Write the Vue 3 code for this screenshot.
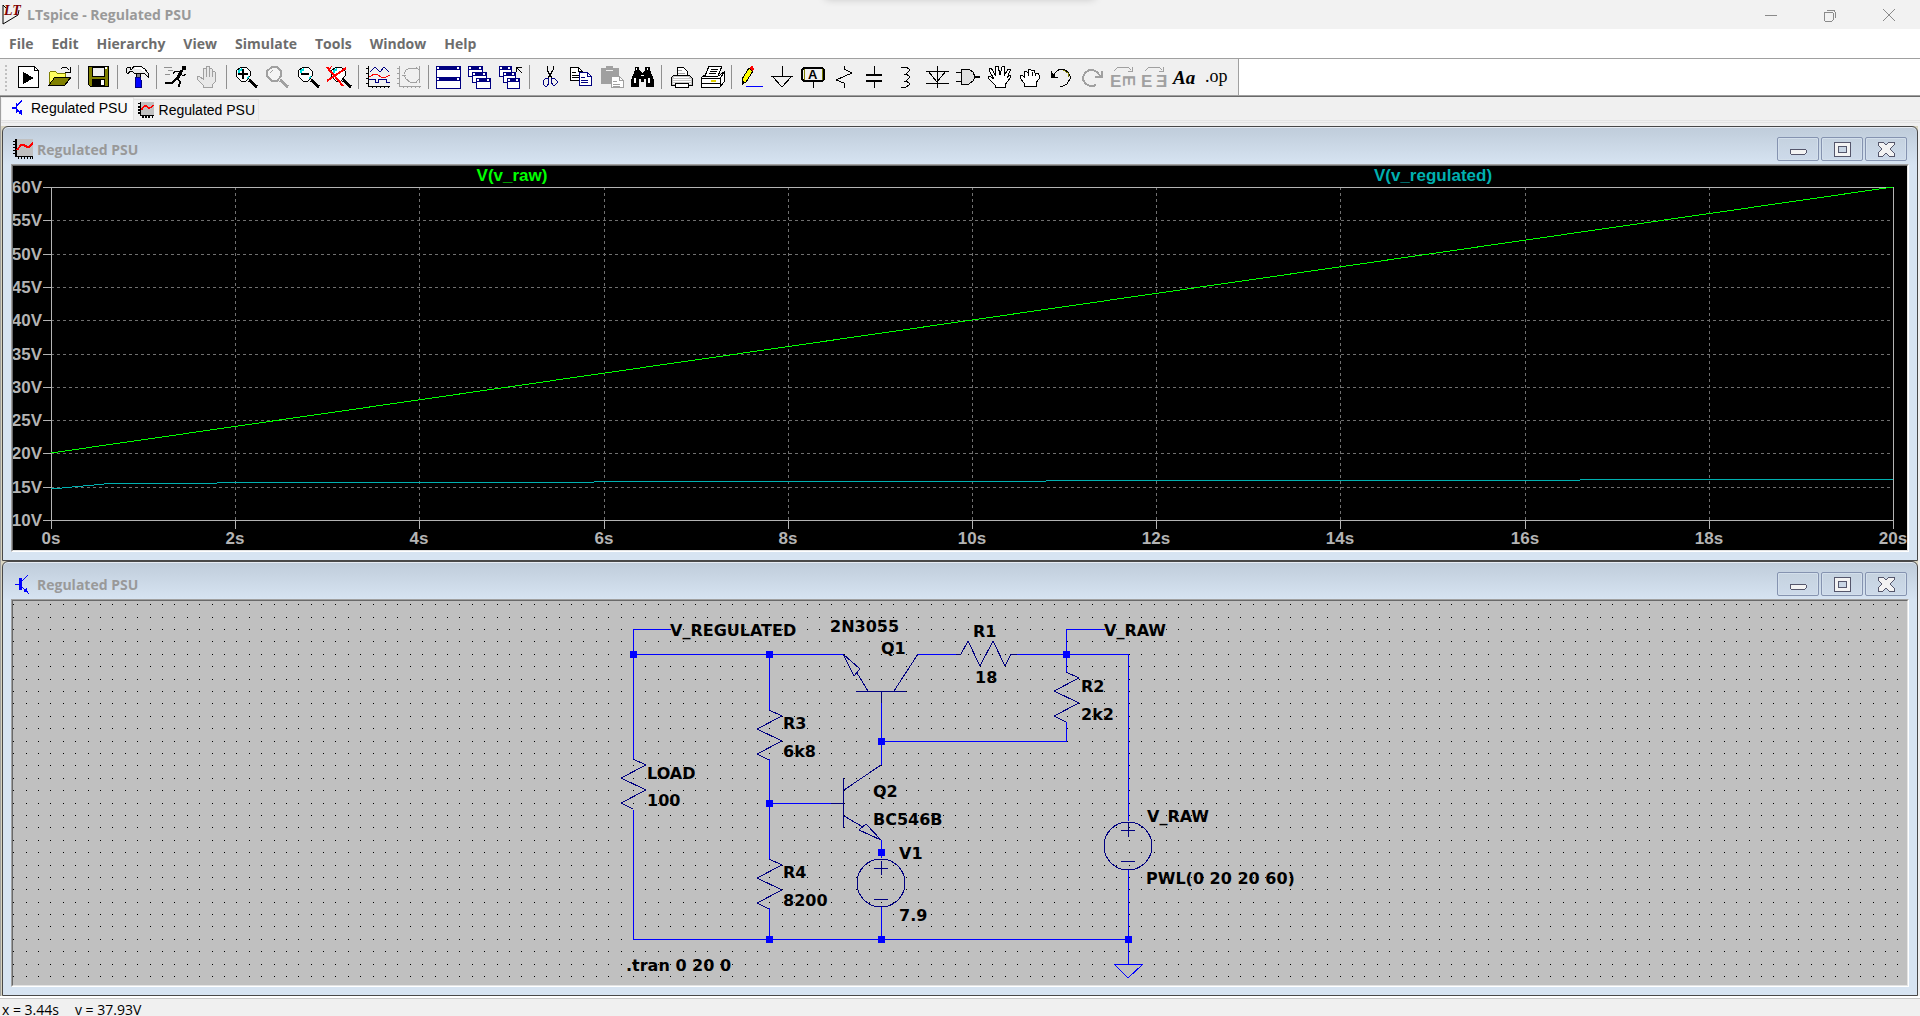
<script setup>
import { computed, onBeforeUnmount, onMounted, reactive, ref } from "vue";

const menus = ["File", "Edit", "Hierarchy", "View", "Simulate", "Tools", "Window", "Help"];

const GREY = "#a0a0a0";
const NAVY = "#000080";

// shape helpers for the 24x24 toolbar glyphs
const line = (d, stroke = "#000", width = 1) => ({ d, stroke, width, fill: "none" });
const area = (d, fill = "#000", stroke = "none", width = 1) => ({ d, fill, stroke, width });
const word = (text, x, y, size, style = {}) => ({ text, x, y, size, ...style });

const lens = "M7 2H12L16 6V11L12 16H7L2 11V6Z";
const lensGlints = [line("M5 8V6L8 4", "#00e0e0", 2), line("M13 14L15 11", "#00e0e0", 1)];
const axes = "M2 1V21H24M0 3H2M0 8H2M0 13H2M0 18H2M6 21V23M10 21V23M14 21V23M18 21V23M22 21V23";
const openHand =
    "M8 22V20L2 14V11H4L8 14V4L9 3H11V11V2L12 1H14V11V3H16L17 4V11V6H19L20 7V17L17 20V22Z";

function miniWindow(x, y, w, h) {
    return [
        area(`M${x} ${y}h${w}v${h}h${-w}Z`, "#fff", NAVY),
        area(`M${x} ${y}h${w}v4h${-w}Z`, NAVY),
        area(`M${x + 1} ${y + 1}h2v2h-2ZM${x + w - 3} ${y + 1}h2v2h-2Z`, "#fff"),
    ];
}

function sheet(x, y, color = "#000", w = 12, h = 13) {
    return [
        area(`M${x} ${y}h${w - 4}l4 4v${h - 4}h${-w}Z`, "#fff", color),
        line(`M${x + w - 4} ${y}v4h4M${x + 2} ${y + 5}h4M${x + 2} ${y + 8}h7M${x + 2} ${y + 10}h7`, color),
    ];
}

const toolGroups = [
    [
        {
            label: "New Schematic",
            shapes: [area("M2 1H18L22 5V22H2Z", "#fff", "#000", 1), line("M18 1V5H22"), area("M7 7L18 13L7 19Z")],
        },
        {
            label: "Open",
            shapes: [
                area("M2 20V8L4 6H8L10 8H18V12H9Z", "#ffff60", "#808000"),
                area("M8 12H24L18 20H2Z", "#808000", "#000"),
                line("M14 4L16 2H19L22 5M23 2V7H18", "#000"),
            ],
        },
    ],
    [
        {
            label: "Save",
            shapes: [
                area("M2 1H22V21H4L2 19Z", "#808000", "#000"),
                area("M6 2H18V11H6Z", "#efefef", "#000"),
                area("M6 14H19V21H6Z"),
                area("M15 15H18V20H15ZM19 2H21V4H19Z", "#fff"),
            ],
        },
    ],
    [
        {
            label: "Control Panel",
            shapes: [
                area("M1 4L3 2H5V4H7L9 1H15L20 4L23 8V12L20 9L17 8H9L7 6H5L3 9L1 7Z", "#e8e8e8", "#000"),
                line("M10 3H15L20 6", "#fff", 2),
                area("M11 8H15V12H11Z", "#808080", "#000"),
                area("M11 12H15L16 15V22H10V15Z", "#0000ff", NAVY),
            ],
        },
    ],
    [
        {
            label: "Run",
            shapes: [
                area("M18 1H22V5H18Z"),
                line("M18 5L13 14", "#000", 3),
                line("M17 6H11L9 9M17 9L19 11L22 9M12 13L16 16"),
                line("M16 16L15 22M12 14L8 18H1", "#000", 2),
                line("M0 2H8M4 5H9M1 9H6", "#909090", 1),
            ],
        },
        { label: "Halt", disabled: true, shapes: [area(openHand, "#e8e8e8", GREY, 1), line("M11 4V12M14 4V12M17 6V12", GREY)] },
    ],
    [
        {
            label: "Zoom In",
            shapes: [area(lens, "#fff", "#000"), ...lensGlints, line("M9 4V14M4 9H14", "#000", 2), line("M15 15L23 22", "#000", 3)],
        },
        {
            label: "Pan",
            disabled: true,
            shapes: [area(lens, "#f4f4f4", GREY, 2), line("M5 8L8 5", GREY), line("M15 15L23 22", GREY, 3)],
        },
        {
            label: "Zoom Out",
            shapes: [area(lens, "#fff", "#000"), ...lensGlints, line("M5 9H13", "#000", 2), line("M15 15L23 22", "#000", 3)],
        },
        {
            label: "Zoom Full Extents",
            shapes: [
                area("M9 2H14L18 6V11L14 16H9L4 11V6Z", "#fff", "#000"),
                line("M7 8V6L10 4", "#00e0e0", 2),
                line("M16 15L24 22", "#000", 3),
                line("M0 2L16 21M0 16L19 3", "#ff0000", 2),
                line("M1 6L5 1", "#ff0000", 1),
            ],
        },
    ],
    [
        {
            label: "Autorange",
            shapes: [
                line(axes),
                line("M4 7L9 2L14 7L18 2L23 7", NAVY),
                line("M3 11H5L8 9L12 10L15 12H20L24 10", "#ff0000"),
                line("M3 14H9V17H12V14H20V17H24", NAVY),
            ],
        },
        {
            label: "Pick Visible Traces",
            disabled: true,
            shapes: [line(axes, GREY), line("M7 9L9 5L13 3H20M7 10L9 14L13 17H20M19 2L22 5V14L19 17M22 1V18M5 10H9", GREY)],
        },
    ],
    [
        { label: "Tile Windows", shapes: [...miniWindow(0, 1, 24, 11), ...miniWindow(0, 12, 24, 11)] },
        {
            label: "Cascade Windows",
            shapes: [...miniWindow(1, 1, 14, 10), ...miniWindow(5, 7, 14, 10), ...miniWindow(9, 13, 14, 10)],
        },
        {
            label: "Close All Windows",
            shapes: [
                ...miniWindow(1, 1, 12, 10),
                ...miniWindow(5, 7, 12, 10),
                ...miniWindow(9, 13, 12, 10),
                line("M18 7V2H24M18 2L24 8", "#000"),
            ],
        },
    ],
    [
        {
            label: "Cut",
            shapes: [
                line("M10 1V5L15 13M16 1V5L11 13", "#000", 1),
                line("M12 8L14 12M14 8L12 12", "#000", 2),
                line("M11 13H9L6 16V19L8 21H10L12 18ZM15 13H17L20 16V18L18 20H16L14 17Z", NAVY, 1),
            ],
        },
        { label: "Copy", shapes: [...sheet(2, 2), ...sheet(11, 7, NAVY)] },
        {
            label: "Paste",
            disabled: true,
            shapes: [area("M2 3H7V1H14V3H20V19H2Z", GREY), line("M7 5H14", "#f0f0f0", 1), ...sheet(12, 11, GREY, 12, 11)],
        },
        {
            label: "Find",
            shapes: [
                area("M5 2H9V5L12 8L15 5V2H20V5L24 15V22H16V14H14V17H11V14H9V22H1V15L5 5Z"),
                area("M6 3H7V5H6ZM17 3H18V5H17ZM4 13H6V18H4ZM18 13H20V18H18ZM11 10H14V11H11Z", "#fff"),
            ],
        },
    ],
    [
        {
            label: "Print",
            shapes: [
                area("M8 10V2H14L18 6V10Z", "#fff", "#000"),
                area("M5 10H20L23 13V20H2V13Z", "#c8c8c8", "#000"),
                line("M5 12H20M4 14H22M4 16H22M4 18H22", "#fff"),
                area("M6 18H19V22H6Z", "#fff", "#000"),
                line("M9 5H13M9 8H16", GREY),
            ],
        },
        {
            label: "Print Setup",
            shapes: [
                area("M1 13L5 10H20L24 7V17L20 22H1Z", "#fff", "#000"),
                area("M5 11L9 1H22L18 11Z", "#fff", "#000"),
                line("M11 4H18M10 6H17M9 8H16M1 13H20V22M1 18H20M20 13L24 8"),
                line("M11 16H16", "#e0d000", 2),
            ],
        },
    ],
    [
        {
            label: "Draw Wire",
            shapes: [
                area("M10 3L14 6L7 17L3 19V14Z", "#ffff00", "#000"),
                area("M10 3L12 1H14L15 4L14 6Z", "#ff0000"),
                area("M3 15L6 18L3 20Z"),
                line("M7 21H24", "#0000ff"),
            ],
        },
        { label: "Place Ground", shapes: [line("M12 1V11M1 11H23M2 11L12 22L22 11", "#000")] },
        {
            label: "Label Net",
            shapes: [
                area("M3 3H21L23 5V14L21 16H3L1 14V5Z", "#f0f0f0", "#000", 2),
                line("M3 4V15M21 4V15", "#808000"),
                word("A", 7, 14, 13, { weight: 700, family: "sans" }),
                line("M12 17V23"),
            ],
        },
        { label: "Place Resistor", shapes: [line("M12 1V4L20 8L4 15L12 18V23", "#000")] },
        { label: "Place Capacitor", shapes: [line("M11 1V10M11 16V23"), line("M3 10H19M3 16H19", "#000", 2)] },
        {
            label: "Place Inductor",
            shapes: [line("M7 2H12L15 4V6L12 9H10M12 9L15 11V13L12 16H10M12 16L15 18V20L12 22H7", "#000")],
        },
        { label: "Place Diode", shapes: [line("M12 1V23M1 6H24M3 6L12 17L21 6M1 18H24", "#000")] },
        {
            label: "Place Component",
            shapes: [area("M5 4H13L17 7L19 12L17 16L13 19H5Z", "#e0e0e0", "#000"), line("M0 7H5M0 16H5"), line("M19 12H24", "#000", 2)],
        },
        {
            label: "Move",
            shapes: [
                area(
                    "M8 22V20L1 13V11H3L7 14L2 5V3H4L9 11L8 2L9 1H11L13 10L15 2L17 1L18 3L17 11L21 4H23V6L20 13L23 10L24 12L18 20V22Z",
                    "#fff",
                    "#000",
                ),
            ],
        },
        {
            label: "Drag",
            shapes: [
                area("M6 21V18L2 13V10H4L6 12V7L8 6L10 8V5L12 4L14 6L16 5L17 8L20 8L21 10V14L18 18V21Z", "#fff", "#000"),
                line("M10 8V11M14 7V11M17 8V11"),
            ],
        },
        {
            label: "Undo",
            shapes: [
                line("M2 6V12H9M3 12L7 7L11 4H15L19 7L21 11V14L18 19L14 21H11", "#000", 1),
                line("M3 8V11H6", "#000", 2),
                line("M14 5L19 8L20 12", "#808000", 1),
            ],
        },
        {
            label: "Redo",
            disabled: true,
            shapes: [line("M22 6V12H15M21 12L17 7L13 5H9L5 8L3 12V15L6 19L10 21H13L16 20", GREY, 2)],
        },
        {
            label: "Rotate",
            disabled: true,
            shapes: [
                line("M3 6L7 2H17L20 5M21 2V6H17", GREY),
                word("E", -1, 22, 17, { weight: 700, family: "sans", fill: GREY }),
                word("E", 0, 0, 17, { weight: 700, family: "sans", fill: GREY, transform: "translate(12 10) rotate(90)" }),
            ],
        },
        {
            label: "Mirror",
            disabled: true,
            shapes: [
                line("M3 6L7 2H17L20 5M21 2V6H17", GREY),
                word("E", -1, 22, 17, { weight: 700, family: "sans", fill: GREY }),
                word("Ǝ", 14, 22, 17, { weight: 700, family: "sans", fill: GREY }),
            ],
        },
        { label: "Text", shapes: [word("Aa", 0, 19, 19, { weight: 700, italic: true })] },
        { label: "SPICE Directive", shapes: [word(".op", 1, 17, 18)] },
    ],
];

function useSize(width, height) {
    const el = ref(null);
    const size = reactive({ width, height });
    let observer;
    onMounted(() => {
        observer = new ResizeObserver(([entry]) => {
            size.width = Math.round(entry.contentRect.width);
            size.height = Math.round(entry.contentRect.height);
        });
        observer.observe(el.value);
    });
    onBeforeUnmount(() => observer.disconnect());
    return { el, size };
}

// waveform viewer
const { el: plotEl, size: plotSize } = useSize(1894, 384);

const frame = computed(() => ({
    left: 38,
    top: 21,
    right: plotSize.width - 14,
    bottom: plotSize.height - 30,
}));
const timeX = (t) => Math.round(frame.value.left + ((frame.value.right - frame.value.left) * t) / 20);
const voltY = (v) => Math.round(frame.value.bottom - ((frame.value.bottom - frame.value.top) * (v - 10)) / 50);

const timeTicks = [0, 2, 4, 6, 8, 10, 12, 14, 16, 18, 20];
const voltTicks = [60, 55, 50, 45, 40, 35, 30, 25, 20, 15, 10];

const traces = [
    {
        name: "V(v_raw)",
        color: "#00ff00",
        labelAt: 5,
        data: [[0, 20], [20, 60]],
    },
    {
        name: "V(v_regulated)",
        color: "#00b0b0",
        labelAt: 15,
        data: [[0, 14.6], [0.7, 15.5], [1.8, 15.6], [5.9, 15.7], [10.8, 15.9], [16.6, 16], [20, 16.2]],
    },
];
const tracePoints = (trace) => trace.data.map(([t, v]) => `${timeX(t)},${voltY(v)}`).join(" ");

// schematic editor
const { el: sheetEl, size: sheetSize } = useSize(1894, 384);

const gridDots = computed(() => {
    const step = 12.396;
    let d = "";
    for (let y = 3.2; y < sheetSize.height; y += step) {
        for (let x = 0.2; x < sheetSize.width - 5; x += step) {
            d += `M${Math.round(x)} ${Math.round(y)}h1v1h-1z`;
        }
    }
    return d;
});

const wires = [
    "M658 28H620V53H830",
    "M620 53V158M620 209V338H1115",
    "M756 53V109M756 158V258M756 307V338",
    "M756 202H818",
    "M905 53H948M998 53H1115V220M1115 269V363",
    "M1092 28H1053V71M1053 121V140H868",
    "M868 102V164M868 239V257M868 306V338",
    "M1101 363H1130L1115 377Z",
];

const resistor = "l13 6l-25 13l25 12l-25 13l12 6";
const symbols = [
    `M620 158${resistor}`,
    `M756 109${resistor}`,
    `M756 258${resistor}`,
    `M1053 71${resistor}`,
    "M943 53H948L955 40L967 65L980 40L992 65L998 53H1004",
    // Q1
    "M843 90H893M868 90V102M855 90L844 72M830 53L841 75L847 68ZM881 90L905 53",
    // Q2
    "M830 177V227M818 202H830M831 189L868 164M831 215L850 226M868 239L846 229L853 223Z",
    // polarity marks
    "M861 267H875M868 260V274M861 298H875",
    "M1108 229H1122M1115 222V236M1108 260H1122",
];
const sources = [
    { x: 868, y: 282 },
    { x: 1115, y: 245 },
];
const junctions = [
    [620, 53], [756, 53], [1053, 53], [868, 140], [756, 202],
    [868, 251], [756, 338], [868, 338], [1115, 338],
];
const labels = [
    ["V_REGULATED", 657, 35],
    ["2N3055", 817, 31],
    ["Q1", 868, 53],
    ["R1", 960, 36],
    ["18", 962, 82],
    ["V_RAW", 1091, 35],
    ["R2", 1068, 91],
    ["2k2", 1068, 119],
    ["R3", 770, 128],
    ["6k8", 770, 156],
    ["LOAD", 634, 178],
    ["100", 634, 205],
    ["Q2", 860, 196],
    ["BC546B", 860, 224],
    ["V1", 886, 258],
    ["7.9", 886, 320],
    ["R4", 770, 277],
    ["8200", 770, 305],
    ["V_RAW", 1134, 221],
    ["PWL(0 20 20 60)", 1133, 283],
    [".tran 0 20 0", 613, 370],
];
</script>

<template>
    <div class="app">
        <header class="title-bar">
            <svg class="logo" viewBox="0 0 20 20" aria-hidden="true">
                <path d="M1 0V19L16 10L17 5" fill="none" stroke="#000" />
                <path d="M1 0L4 3" stroke="#000" />
                <text x="2" y="10" class="logo-text">LT</text>
            </svg>
            <h1>LTspice - Regulated PSU</h1>
            <div class="window-buttons">
                <button type="button" aria-label="Minimize">
                    <svg viewBox="0 0 14 14"><path d="M1 7H13" /></svg>
                </button>
                <button type="button" aria-label="Restore">
                    <svg viewBox="0 0 14 14">
                        <rect x="1" y="4" width="9" height="9" rx="1" />
                        <path d="M4 2H10Q12 2 12 4V10" />
                    </svg>
                </button>
                <button type="button" aria-label="Close">
                    <svg viewBox="0 0 14 14"><path d="M1 1L13 13M13 1L1 13" class="smooth" /></svg>
                </button>
            </div>
        </header>

        <nav class="menu-bar">
            <button v-for="menu in menus" :key="menu" type="button">{{ menu }}</button>
        </nav>

        <div class="tool-row">
            <div class="toolbar" role="toolbar">
                <div v-for="(group, g) in toolGroups" :key="g" class="tool-group">
                    <button
                        v-for="tool in group"
                        :key="tool.label"
                        type="button"
                        :aria-label="tool.label"
                        :disabled="tool.disabled"
                    >
                        <svg viewBox="0 0 24 24">
                            <template v-for="(s, i) in tool.shapes" :key="i">
                                <text
                                    v-if="s.text"
                                    :x="s.x"
                                    :y="s.y"
                                    :font-size="s.size"
                                    :font-weight="s.weight"
                                    :font-style="s.italic ? 'italic' : 'normal'"
                                    :fill="s.fill || '#000'"
                                    :transform="s.transform"
                                    :class="{ sans: s.family === 'sans' }"
                                >{{ s.text }}</text>
                                <path v-else :d="s.d" :fill="s.fill" :stroke="s.stroke" :stroke-width="s.width" />
                            </template>
                        </svg>
                    </button>
                </div>
            </div>
        </div>

        <div class="tabs" role="tablist">
            <button type="button" role="tab" aria-selected="true" class="tab active">
                <svg class="tab-icon" viewBox="0 0 20 20" aria-hidden="true">
                    <path d="M2 10H8M8 4V16M8 8L15 1M8 12L15 18M11 16H14V13" fill="none" stroke="#0000ff" stroke-width="2" />
                </svg>
                Regulated PSU
            </button>
            <button type="button" role="tab" aria-selected="false" class="tab">
                <svg class="tab-icon" viewBox="0 0 20 20" aria-hidden="true">
                    <path d="M2 0H20V18H2Z" fill="#c0c0c0" />
                    <path d="M3 0V17H20M0 2H3M0 6H3M0 10H3M0 14H3M6 17V20M10 17V20M14 17V20M18 17V20" fill="none" stroke="#000" stroke-width="2" />
                    <path d="M4 10L8 5H11L14 8L20 4" fill="none" stroke="#ff0000" stroke-width="2" />
                </svg>
                Regulated PSU
            </button>
        </div>

        <main class="workspace">
            <section v-for="kind in ['plot', 'schematic']" :key="kind" class="child-window">
                <div class="child-title">
                    <svg v-if="kind === 'plot'" class="child-icon" viewBox="0 0 20 20" aria-hidden="true">
                        <path d="M3 0H20V17H3Z" fill="#c0c0c0" />
                        <path d="M3 0V18" fill="none" stroke="#000" stroke-width="2" />
                        <path d="M2 17H20M0 2H3M0 5H3M0 8H3M0 11H3M0 14H3M5 17V20M8 17V20M11 17V20M14 17V20M17 17V20M19 17V20" fill="none" stroke="#000" />
                        <path d="M4 11L8 6H11L14 8H16L20 4" fill="none" stroke="#ff0000" stroke-width="2" />
                    </svg>
                    <svg v-else class="child-icon" viewBox="0 0 20 20" aria-hidden="true">
                        <path d="M6 4H9V16H6Z" fill="#0000ff" />
                        <path d="M2 10H6M9 7L15 1M9 13L16 20" fill="none" stroke="#0000ff" />
                        <path d="M10 17L14 14L15 19Z" fill="#0000ff" />
                    </svg>
                    <h2>Regulated PSU</h2>
                    <div class="child-buttons">
                        <button type="button" aria-label="Minimize">
                            <svg viewBox="0 0 20 20"><rect x="2" y="10" width="16" height="5" rx="1" /></svg>
                        </button>
                        <button type="button" aria-label="Maximize">
                            <svg viewBox="0 0 20 20"><path d="M2 3H18V17H2ZM6 7V13H14V7Z" fill-rule="evenodd" /></svg>
                        </button>
                        <button type="button" aria-label="Close">
                            <svg viewBox="0 0 20 20">
                                <path d="M2 3H7L10 6L13 3H18V6L14 10L18 14V17H13L10 14L7 17H2V14L6 10L2 6Z" />
                            </svg>
                        </button>
                    </div>
                </div>

                <div v-if="kind === 'plot'" class="client plot">
                    <svg :ref="(node) => (plotEl = node)" aria-label="Waveforms">
                        <g class="grid">
                            <path v-for="t in timeTicks.slice(1, -1)" :key="'t' + t" :d="`M${timeX(t)} ${frame.top}V${frame.bottom}`" />
                            <path v-for="v in voltTicks.slice(1, -1)" :key="'v' + v" :d="`M${frame.left} ${voltY(v)}H${frame.right}`" />
                        </g>
                        <g class="axis">
                            <path :d="`M${frame.left} ${frame.top}H${frame.right}V${frame.bottom}H${frame.left}Z`" />
                            <path v-for="t in timeTicks" :key="'t' + t" :d="`M${timeX(t)} ${frame.bottom}v9`" />
                            <path v-for="v in voltTicks" :key="'v' + v" :d="`M${frame.left} ${voltY(v)}h-8`" />
                        </g>
                        <g v-for="trace in traces" :key="trace.name">
                            <polyline class="trace" :points="tracePoints(trace)" :stroke="trace.color" />
                            <text :x="timeX(trace.labelAt)" y="15" :fill="trace.color" text-anchor="middle">{{ trace.name }}</text>
                        </g>
                        <text v-for="v in voltTicks" :key="'v' + v" x="29" :y="voltY(v) + 6" class="tick" text-anchor="end">{{ v }}V</text>
                        <text v-for="t in timeTicks" :key="'t' + t" :x="timeX(t)" :y="frame.bottom + 24" class="tick" text-anchor="middle">{{ t }}s</text>
                    </svg>
                </div>

                <div v-else class="client schematic">
                    <svg :ref="(node) => (sheetEl = node)" aria-label="Circuit">
                        <path :d="gridDots" />
                        <path v-for="d in wires" :key="d" :d="d" class="wire" />
                        <path v-for="d in symbols" :key="d" :d="d" class="symbol" />
                        <circle v-for="s in sources" :key="s.x" :cx="s.x" :cy="s.y" r="24" class="symbol" />
                        <rect v-for="([x, y], i) in junctions" :key="i" :x="x - 3" :y="y - 3" width="7" height="7" class="junction" />
                        <text v-for="([text, x, y], i) in labels" :key="i" :x="x" :y="y">{{ text }}</text>
                    </svg>
                </div>
            </section>
        </main>

        <footer class="status-bar">
            <span>x = 3.44s</span>
            <span>v = 37.93V</span>
        </footer>
    </div>
</template>

<style>
body {
    margin: 0;
}
</style>

<style scoped>
.app {
    display: flex;
    flex-direction: column;
    height: 100vh;
    overflow: hidden;
    background: #f0f0f0;
    font-family: "Open Sans", "Noto Sans", sans-serif;
    font-size: 14px;
}

button {
    margin: 0;
    padding: 0;
    border: 0;
    background: none;
    font: inherit;
    color: inherit;
}

h1,
h2 {
    margin: 0;
    font-size: 14px;
    font-weight: 700;
    color: #999;
}

svg {
    display: block;
    shape-rendering: crispEdges;
}

.title-bar {
    position: relative;
    display: flex;
    align-items: center;
    flex: none;
    height: 29px;
    padding: 0 2px;
    background: #f2f2f2;
    overflow: hidden;

    &::before {
        content: "";
        position: absolute;
        top: -12px;
        left: 50%;
        width: 272px;
        height: 10px;
        margin-left: -136px;
        border-radius: 8px;
        box-shadow: 0 1px 8px rgba(0, 0, 0, 0.2);
    }

    h1 {
        flex: 1;
        padding-left: 5px;
        line-height: 20px;
    }
}

.logo {
    width: 20px;
    height: 20px;
    overflow: visible;
    shape-rendering: auto;
}

.logo-text {
    font: italic 700 14px "Liberation Serif", serif;
    fill: #800000;
}

.window-buttons {
    display: flex;

    button {
        width: 59px;
        height: 28px;
        display: grid;
        place-items: center;
    }

    svg {
        width: 14px;
        height: 14px;
        fill: none;
        stroke: #8a8a8a;
    }

    .smooth {
        shape-rendering: auto;
    }
}

.menu-bar {
    display: flex;
    flex: none;
    height: 29px;
    background: #fff;
    font-weight: 700;
    color: #6d6d6d;

    button {
        padding: 0 9px;
    }
}

.tool-row {
    display: flex;
    flex: none;
    height: 37px;
    border-top: 1px solid #a0a0a0;
    border-bottom: 1px solid #696969;
    background: #fff;
    box-shadow: inset 0 -1px #a0a0a0;
}

.toolbar {
    position: relative;
    display: flex;
    gap: 8px;
    padding: 0 7px 0 12px;
    border-right: 1px solid #a0a0a0;
    background: #f0f0f0;
    box-shadow: inset 0 -1px #a0a0a0;

    &::before {
        content: "";
        position: absolute;
        left: 5px;
        top: 6px;
        height: 26px;
        border-left: 2px dotted #c0c0c0;
    }
}

.tool-group {
    position: relative;
    display: flex;

    & + .tool-group::before {
        content: "";
        position: absolute;
        left: -4px;
        top: 6px;
        width: 1px;
        height: 24px;
        background: #909090;
    }

    button {
        width: 31px;
        padding: 0 3px 1px 4px;
    }

    svg {
        width: 24px;
        height: 24px;
        overflow: visible;
    }

    text {
        font-family: "Liberation Serif", serif;

        &.sans {
            font-family: "Liberation Sans", sans-serif;
        }
    }
}

.tabs {
    display: flex;
    flex: none;
    align-items: flex-start;
    height: 29px;
    padding: 0 2px;
    font-family: "Liberation Sans", sans-serif;
    box-shadow: inset 1px 0 #a0a0a0;
    background: linear-gradient(#e3e3e3, #e3e3e3) 0 23px / 100% 1px no-repeat, linear-gradient(#e3e3e3, #e3e3e3) 0 25px / 100% 1px no-repeat;
}

.tab {
    display: flex;
    align-items: center;
    height: 22px;
    margin-top: 2px;
    padding: 0 3px 0 4px;
    gap: 5px;
    border: 1px solid #e3e3e3;
    border-left: 0;
    background: #f0f0f0;

    &.active {
        height: 24px;
        margin-top: 0;
        padding: 0 5px 2px 8px;
        background: #f9f9f9;
    }
}

.tab-icon {
    width: 16px;
    height: 16px;
}

.workspace {
    display: grid;
    grid-template-rows: 1fr 1fr;
    flex: 1;
    min-height: 0;
    padding: 0 2px;
    background: #d8d4c0;
    box-shadow: inset 1px 0 #a0a0a0, inset -2px 0 #f0f0f0;
}

.child-window {
    display: flex;
    flex-direction: column;
    min-width: 0;
    min-height: 0;
    padding: 0 8px 8px;
    border: 1px solid #484848;
    border-radius: 6px 6px 0 0;
    background: linear-gradient(#bfccda, #d7e4f2 38px);
    box-shadow: inset 0 1px #e6ebf2;
}

.child-title {
    display: flex;
    flex: none;
    height: 37px;
    padding: 0 2px;

    h2 {
        flex: 1;
        padding: 11px 0 0 4px;
        line-height: 24px;
    }
}

.child-icon {
    width: 20px;
    height: 20px;
    margin-top: 12px;
}

.child-buttons {
    display: flex;
    gap: 2px;
    padding-top: 10px;

    button {
        display: grid;
        place-items: center;
        width: 42px;
        height: 24px;
        border: 1px solid #8593b0;
        border-radius: 2px;
        background: linear-gradient(#c5d2df, #cddaea);
        box-shadow: inset 0 0 0 1px #d3dfeb;
    }

    svg {
        width: 20px;
        height: 20px;
        fill: #f3f3f3;
        stroke: #55566b;
    }
}

.client {
    flex: 1;
    min-height: 0;
    border: 1px solid;
    border-color: #a0a0a0 #fff #fff #a0a0a0;

    svg {
        box-sizing: border-box;
        width: 100%;
        height: 100%;
        border: 1px solid;
        border-color: #696969 #e3e3e3 #e3e3e3 #696969;
    }
}

.plot svg {
    background: #000;

    path,
    polyline {
        fill: none;
        stroke-width: 1px;
    }

    text {
        font: 700 17px "Liberation Sans", Arial, sans-serif;
    }

    .grid {
        stroke: #707070;
        stroke-dasharray: 3 3;
    }

    .axis {
        stroke: #b4b4b4;
    }

    .tick {
        fill: #b4b4b4;
    }
}

.schematic svg {
    background: #c0c0c0;

    .wire,
    .symbol {
        fill: none;
        stroke: #0000ff;
        stroke-width: 1px;
    }

    .symbol {
        stroke: #000080;
    }

    .junction {
        fill: #0000ff;
    }

    text {
        font: 700 16px "DejaVu Sans", sans-serif;
    }
}

.status-bar {
    display: flex;
    flex: none;
    align-items: flex-start;
    gap: 16px;
    box-sizing: border-box;
    height: 20px;
    padding: 3px 2px 0;
    border-top: 2px solid #fff;
    box-shadow: inset 0 1px #c8c8c8;
    line-height: 18px;
}
</style>
